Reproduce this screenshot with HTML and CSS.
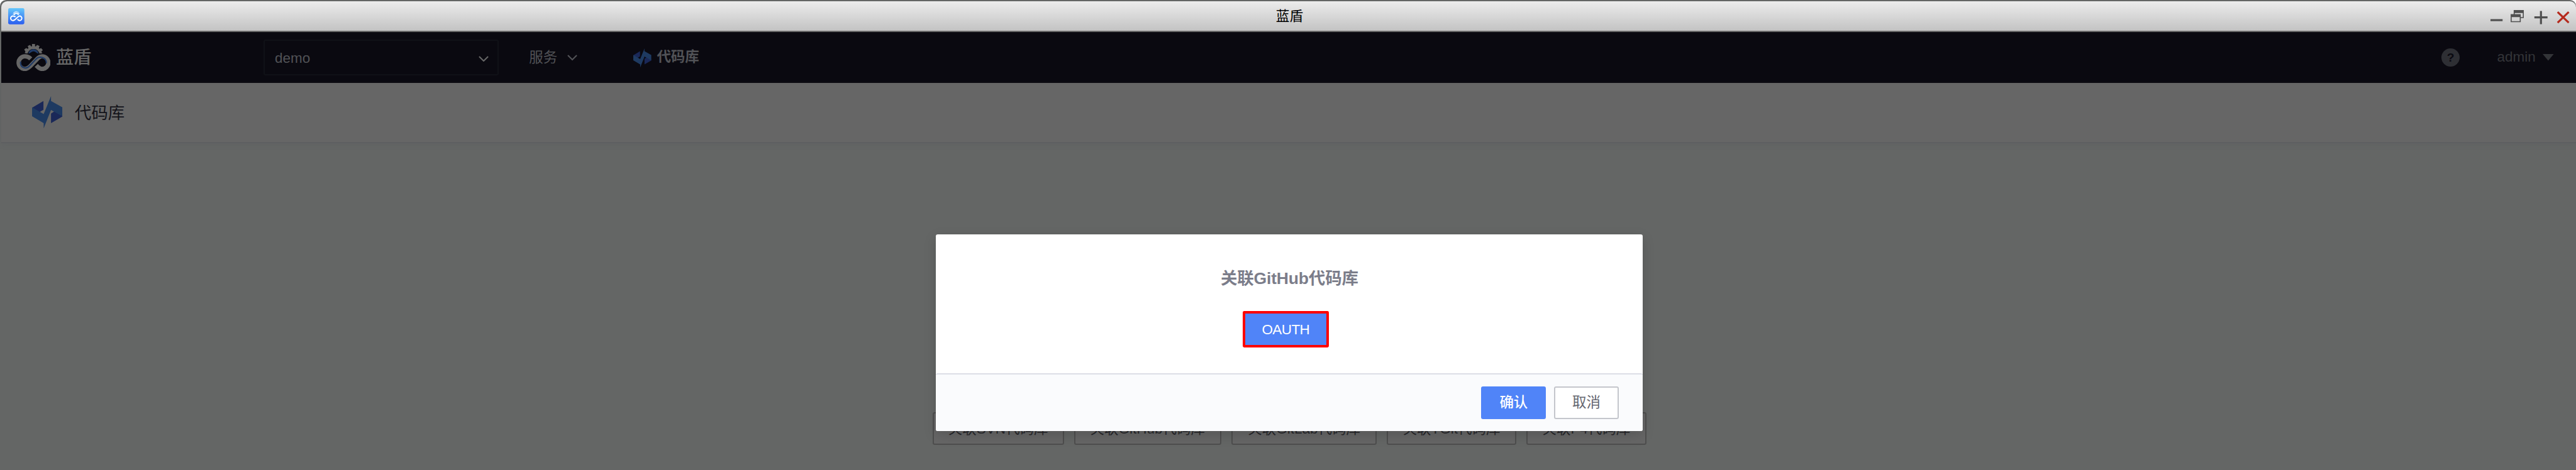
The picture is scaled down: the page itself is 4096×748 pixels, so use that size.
FILE: index.html
```html
<!DOCTYPE html>
<html lang="zh-CN">
<head>
<meta charset="utf-8">
<title>蓝盾</title>
<link rel="stylesheet" href="styles.css">
</head>
<body>
<svg class="defs" width="0" height="0">
  <symbol id="repo" viewBox="0 0 60 64">
    <path d="M0 23 22.500 9.500V27L14 32Z" fill="#1a2858"/>
    <path d="M37.500 34.500 46 29 60 39V40.500L37.500 53.500Z" fill="#1a2858"/>
    <path d="M37.500 0V9.500L60 22V40L37.500 27.500 23 64V53.500L0 40V22L23 35.500Z" fill="#1e3a61"/>
  </symbol>
  <symbol id="chevron" viewBox="0 0 20 12"><path d="M1.200 1.200 10 10 18.800 1.200" fill="none" stroke="currentColor" stroke-width="2.600"/></symbol>
</svg>
<div class="window">
  <header class="titlebar">
    <svg class="app-icon" viewBox="0 0 32 32">
      <defs><linearGradient id="sky" x1="0" y1="0" x2="0" y2="1"><stop offset="0" stop-color="#65c8fb"/><stop offset="1" stop-color="#2a5df0"/></linearGradient></defs>
      <rect width="32" height="32" rx="3" fill="url(#sky)"/>
      <path d="M10.500 12.500A5.500 5.500 0 0 1 21.500 12.500" fill="none" stroke="#fff" stroke-width="2" stroke-dasharray="1.800 1"/>
      <path d="M11.800 13.500A4.300 4.300 0 0 1 20.200 13.500" fill="none" stroke="#fff" stroke-width="2"/>
      <path d="M16.500 20C20 16.500 20.500 15.500 22.500 15.500a4.500 4.500 0 0 1 0 9C20.500 24.500 20 23.500 18.500 22M14.500 17.500C13 16 12 15.500 9.500 15.500a4.500 4.500 0 0 0 0 9C12 24.500 13 23.500 16.500 20" fill="none" stroke="#fff" stroke-width="2.500"/>
    </svg>
    <h1 class="window-title">蓝盾</h1>
    <svg class="controls" viewBox="0 0 160 30">
      <path d="M0 20H24" stroke="#505050" stroke-width="4"/>
      <path d="M46 0H66V16H60V14H64V6H48V8H46ZM40 8H60V24H40ZM42 14V22H58V14Z" fill="#505050" fill-rule="evenodd"/>
      <path d="M87 14.500H113M100 2V28" stroke="#505050" stroke-width="4"/>
      <path d="M133 4 155 25M155 4 133 25" stroke="#b52a1d" stroke-width="4"/>
    </svg>
  </header>
  <nav class="navbar">
    <div class="brand">
      <svg class="brand-mark" viewBox="0 0 68 54">
        <path d="M15.500 11 19.500 8 22.500 9.500 24 8 22.500 4 27 2 29.500 5 31 4.500V0H37V4.500L38.500 5 41 2 46 4 44.500 8 46 9.500 49 8 52.500 12 49.500 15 51.500 18.500 46 19C43 12 39 10 34 10S25 12 22 19L16.500 18 18 15Z" fill="#666"/>
        <path d="M24 19C26 7.500 42 7.500 44 19 41 19 38 14.500 34 14.500S27 19 24 19Z" fill="#1f3a66"/>
        <path d="M28.500 29.500C24.500 25.500 21.500 24.500 17 24.500a12.500 12.500 0 0 0 0 25C21.500 49.500 24 47.500 28 43.500L40 31C44 26.500 47 24.500 51 24.500a12.500 12.500 0 0 1 0 25C47 49.500 44 47.500 39.500 42.500" fill="none" stroke="#666" stroke-width="8.600"/>
        <path d="M8.500 35C6.500 46 19 52 26 43.500L38 31C46 22 60 27 59.500 38" fill="none" stroke="#1f3a66" stroke-width="2.600"/>
      </svg>
      <span class="brand-name">蓝盾</span>
    </div>
    <div class="project"><span>demo</span><svg class="chevron light"><use href="#chevron"/></svg></div>
    <div class="service">服务<svg class="chevron"><use href="#chevron"/></svg></div>
    <div class="current"><svg class="repo-small"><use href="#repo"/></svg>代码库</div>
    <div class="account">
      <span class="help">?</span>
      <span>admin</span>
      <svg class="caret" viewBox="0 0 22 13"><path d="M0 0H22L11 13Z" fill="#333438"/></svg>
    </div>
  </nav>
  <section class="page-head"><svg class="repo-large"><use href="#repo"/></svg><h2>代码库</h2></section>
  <main class="content">
    <div class="link-row">
      <button class="link svn">关联SVN代码库</button>
      <button class="link github">关联GitHub代码库</button>
      <button class="link gitlab">关联GitLab代码库</button>
      <button class="link tgit">关联TGit代码库</button>
      <button class="link p4">关联P4代码库</button>
    </div>
  </main>
  <div class="dialog" role="dialog">
    <div class="dialog-body">
      <h3>关联GitHub代码库</h3>
      <button class="oauth">OAUTH</button>
    </div>
    <footer class="dialog-foot">
      <button class="btn primary">确认</button>
      <button class="btn">取消</button>
    </footer>
  </div>
</div>
</body>
</html>
```
FILE: styles.css
```css
* { box-sizing: border-box; }
html, body { margin: 0; overflow: hidden; background: #fff; }
h1, h2, h3 { margin: 0; font-weight: 400; }
button { font: inherit; padding: 0; margin: 0; white-space: nowrap; }
svg { display: block; flex: none; }
.defs { position: absolute; }

.window {
  position: relative;
  display: flex;
  flex-direction: column;
  width: 5102px;
  height: 931.7px;
  padding: 2.5px 0 0 2px;
  overflow: hidden;
  border-radius: 12px 12px 0 0;
  background: #646665;
  font: 28px/1.2 "Liberation Sans", "Noto Sans CJK SC", sans-serif;
  zoom: .80282;
}

.titlebar {
  display: flex;
  flex: none;
  align-items: center;
  justify-content: space-between;
  height: 61.5px;
  padding: 0 10px 0 14px;
  border-bottom: 2.5px solid #696969;
  border-radius: 12px 12px 0 0;
  background: linear-gradient(#ececec, #c3c3c3);
}
.app-icon { width: 32px; height: 32px; margin-right: 128px; }
.window-title { padding: 1px 0 0; color: #000; font-size: 27px; line-height: 58px; }
.controls { width: 160px; height: 30px; margin-top: 5px; }

.navbar {
  display: flex;
  flex: none;
  align-items: center;
  height: 100px;
  padding-left: 30px;
  background: #0a0910;
  color: #515256;
}
.brand { display: flex; align-items: center; width: 490px; gap: 11px; color: #666; font-size: 35px; font-weight: 500; }
.brand-mark { width: 68px; height: 54px; }
.brand-name { padding-top: 2px; }
.project {
  display: flex;
  align-items: center;
  justify-content: space-between;
  width: 466px;
  height: 72px;
  padding: 5px 17px 0 20px;
  border: 2.5px solid #101117;
  border-radius: 4px;
}
.chevron { width: 20px; height: 12px; }
.light { color: #666; }
.service { display: flex; align-items: center; gap: 20px; width: 205px; margin-left: 60px; padding-top: 2px; }
.current { display: flex; align-items: center; gap: 10px; padding-top: 1px; font-weight: 700; }
.repo-small { width: 38px; height: 38px; }
.account { display: flex; align-items: center; margin-left: auto; padding-right: 44px; color: #333438; }
.help { width: 36px; height: 36px; margin-right: 74px; border-radius: 50%; background: #2e2f34; color: #0a0910; font-size: 24px; font-weight: 700; line-height: 37px; text-align: center; }
.caret { width: 22px; height: 13px; margin-left: 14px; }

.page-head {
  position: relative;
  display: flex;
  flex: none;
  align-items: center;
  gap: 24px;
  height: 120px;
  padding-left: 62px;
  border-bottom: 2.5px solid #5e5f61;
  background: #666;
  box-shadow: 0 4px 10px rgba(80, 85, 95, .2);
  color: #14141a;
}
.page-head h2 { padding-top: 4px; font-size: 33px; }
.repo-large { width: 60px; height: 64px; }

.content { display: flex; flex: 1; flex-direction: column; justify-content: flex-end; padding: 0 0 50px 1845px; background: #646665; }
.link-row { display: flex; gap: 20px; }
.link { height: 64px; padding-top: 4px; border: 2.5px solid #4e4e4e; border-radius: 4px; background: #666; color: #27272b; }
.svn { width: 260px; }
.github { width: 292px; }
.gitlab { width: 288px; }
.tgit { width: 256px; }
.p4 { width: 238px; }

.dialog {
  position: absolute;
  top: 464px;
  left: 1854px;
  width: 1400px;
  height: 390px;
  border-radius: 4px;
  background: #fff;
  box-shadow: 0 8px 24px rgba(0, 0, 0, .15);
}
.dialog-body { display: flex; flex-direction: column; align-items: center; height: 276px; padding-top: 68px; }
.dialog h3 { height: 40px; color: #7b7d8a; font-size: 33px; font-weight: 700; line-height: 40px; letter-spacing: -.2px; }
.oauth { width: 171px; height: 72px; margin: 45px 15px 0 0; border: 6px solid #fe0000; border-radius: 3px; background: #5084f8; color: #fff; line-height: 60px; letter-spacing: -.7px; padding-top: 2px; }
.dialog-foot {
  display: flex;
  justify-content: flex-end;
  gap: 16px;
  height: 114px;
  padding: 24px 48px 0;
  border-top: 2.5px solid #dcdee6;
  border-radius: 4px;
  background: #fafbfd;
}
.btn { width: 128px; height: 64px; border: 2.5px solid #c4c6cc; border-radius: 4px; background: #fff; color: #63656e; }
.primary { border-color: #5084f8; background: #5084f8; color: #fff; font-weight: 500; }
```
